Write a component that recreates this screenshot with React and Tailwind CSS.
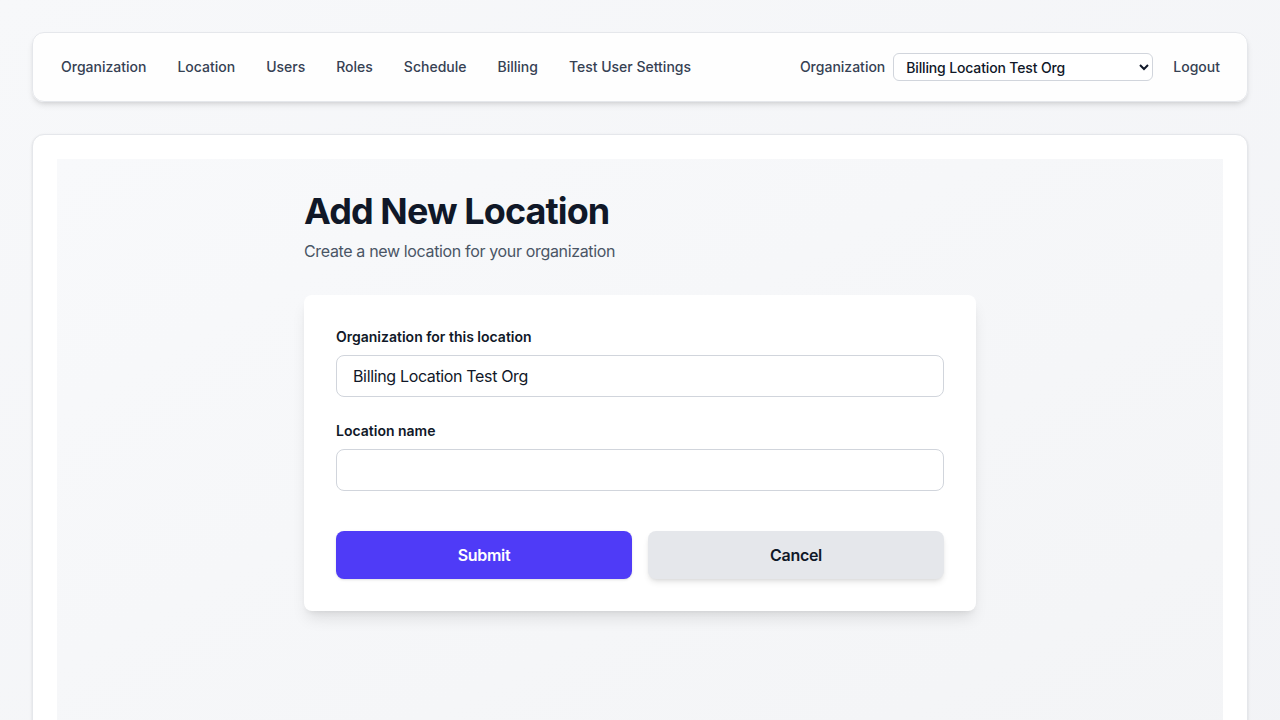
import React from 'react';

const navLinks = ['Organization', 'Location', 'Users', 'Roles', 'Schedule', 'Billing', 'Test User Settings'];

const App = () => {
  return (
    <div
      className="min-h-screen bg-gradient-to-br from-[#f7f8fa] to-[#f2f3f6] p-8 text-gray-900"
      style={{ fontFamily: 'Inter, "Noto Sans", sans-serif' }}
    >
      {/* Top nav */}
      <header className="h-[70px] bg-white/90 border border-gray-200 rounded-xl shadow-md flex items-center justify-between pl-[28px] pr-[27px]">
        <nav className="flex items-center gap-[31px] text-sm font-medium text-gray-700">
          {navLinks.map((l) => (
            <a key={l} href="#" className="hover:text-gray-900">{l}</a>
          ))}
        </nav>
        <div className="flex items-center text-sm font-medium text-gray-700">
          <span>Organization</span>
          <select
            className="ml-2 w-[260px] h-[28px] pl-2 pr-2 border border-gray-300 rounded-md bg-white text-sm text-gray-900 font-medium tracking-[-0.15px]"
            defaultValue="billing"
          >
            <option value="billing">Billing Location Test Org</option>
          </select>
          <a href="#" className="ml-5">Logout</a>
        </div>
      </header>

      {/* Main */}
      <main className="mt-8 bg-white border border-gray-200 rounded-xl shadow-sm p-6">
        <div className="bg-gradient-to-br from-[#f8f9fb] to-[#f3f4f6] min-h-[640px] px-4 py-8">
          <div className="max-w-2xl mx-auto">
            <h1 className="text-4xl font-bold tracking-[-0.9px] text-gray-900">Add New Location</h1>
            <p className="mt-2 text-base text-gray-600 tracking-[-0.35px]">Create a new location for your organization</p>

            <form className="mt-8 bg-white rounded-lg shadow-lg p-8">
              <label className="block text-sm font-semibold text-gray-900">Organization for this location</label>
              <input
                className="mt-2 w-full h-[42px] px-4 border border-gray-300 rounded-lg text-base text-gray-900 bg-white tracking-[-0.35px]"
                defaultValue="Billing Location Test Org"
                readOnly
              />

              <label className="block mt-6 text-sm font-semibold text-gray-900">Location name</label>
              <input className="mt-2 w-full h-[42px] px-4 border border-gray-300 rounded-lg text-base bg-white" />

              <div className="mt-10 grid grid-cols-2 gap-4">
                <button type="button" className="h-12 rounded-lg bg-[#4f3bf7] text-white font-semibold text-base shadow-sm tracking-[-0.3px]">
                  Submit
                </button>
                <button type="button" className="h-12 rounded-lg bg-gray-200 text-gray-900 font-semibold text-base shadow-md tracking-[-0.3px]">
                  Cancel
                </button>
              </div>
            </form>
          </div>
        </div>
      </main>
    </div>
  );
};

export default App;
